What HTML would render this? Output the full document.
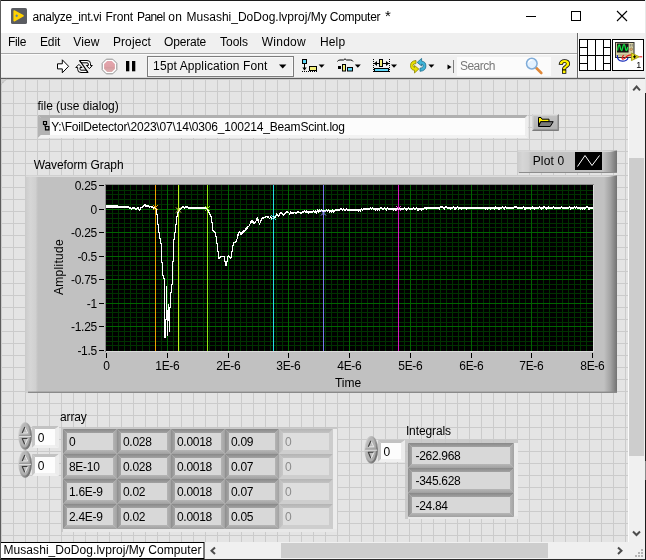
<!DOCTYPE html>
<html><head><meta charset="utf-8"><title>analyze_int.vi Front Panel</title>
<style>
html,body{margin:0;padding:0;background:#fff;}
#w{position:relative;width:646px;height:560px;overflow:hidden;font-family:"Liberation Sans", sans-serif;will-change:transform;}
#w svg{position:absolute;left:0;top:0;}
.t{position:absolute;white-space:pre;line-height:16px;font-size:12px;}
</style></head><body><div id="w">
<svg width="646" height="560" viewBox="0 0 646 560" shape-rendering="auto">
<defs>
<pattern id="grid" x="1" y="79" width="12" height="12" patternUnits="userSpaceOnUse"><rect width="12" height="12" fill="#e4e4e4"/><rect width="1" height="12" fill="#cbcbcb"/><rect width="12" height="1" fill="#cbcbcb"/></pattern>
<linearGradient id="gl" x1="0" x2="1" y1="0" y2="0"><stop offset="0" stop-color="#cdcdcd"/><stop offset="0.35" stop-color="#d6d6d6"/><stop offset="0.8" stop-color="#d0d0d0"/><stop offset="1" stop-color="#c1c1c1"/></linearGradient>
<linearGradient id="gr" x1="0" x2="1" y1="0" y2="0"><stop offset="0" stop-color="#c1c1c1"/><stop offset="0.5" stop-color="#a2a2a2"/><stop offset="1" stop-color="#727272"/></linearGradient>
<linearGradient id="ct" x1="0" x2="0" y1="0" y2="1"><stop offset="0" stop-color="#888888"/><stop offset="1" stop-color="#a2a2a2"/></linearGradient>
<linearGradient id="cl" x1="0" x2="1" y1="0" y2="0"><stop offset="0" stop-color="#8e8e8e"/><stop offset="1" stop-color="#a6a6a6"/></linearGradient>
<linearGradient id="cb" x1="0" x2="0" y1="0" y2="1"><stop offset="0" stop-color="#b6b6b6"/><stop offset="1" stop-color="#a0a0a0"/></linearGradient>
<linearGradient id="cr" x1="0" x2="1" y1="0" y2="0"><stop offset="0" stop-color="#b4b4b4"/><stop offset="1" stop-color="#a2a2a2"/></linearGradient>
<linearGradient id="dt" x1="0" x2="0" y1="0" y2="1"><stop offset="0" stop-color="#b4b4b4"/><stop offset="1" stop-color="#c2c2c2"/></linearGradient>
<linearGradient id="dl" x1="0" x2="1" y1="0" y2="0"><stop offset="0" stop-color="#bcbcbc"/><stop offset="1" stop-color="#c8c8c8"/></linearGradient>
<linearGradient id="ov" x1="0" x2="1" y1="0" y2="0.6"><stop offset="0" stop-color="#e2e2e2"/><stop offset="0.4" stop-color="#b8b8b8"/><stop offset="1" stop-color="#6c6c6c"/></linearGradient>
<linearGradient id="btn" x1="0" x2="0" y1="0" y2="1"><stop offset="0" stop-color="#c4c4c4"/><stop offset="1" stop-color="#b0b0b0"/></linearGradient>
<linearGradient id="stopg" x1="0" x2="0" y1="0" y2="1"><stop offset="0" stop-color="#e4a6ae"/><stop offset="0.5" stop-color="#dfa0a6"/><stop offset="0.55" stop-color="#d69a9e"/><stop offset="1" stop-color="#dcb0b0"/></linearGradient>
</defs>
<rect x="0" y="0" width="646" height="560" fill="#ffffff" />
<rect x="1" y="33" width="644" height="45" fill="#f0f0f0" />
<rect x="1" y="53" width="576" height="1" fill="#a8a8a8" />
<rect x="1" y="77" width="644" height="1" fill="#ffffff" />
<rect x="1" y="77.75" width="644" height="1.25" fill="#5c5c5c" />
<rect x="577" y="33" width="1" height="45" fill="#6a6a6a" />
<rect x="578" y="33" width="1" height="44" fill="#fafafa" />
<rect x="1" y="54" width="576" height="1" fill="#fbfbfb" />
<rect x="11" y="8" width="16" height="16" rx="1.6" fill="#5a5c61"/>
<path d="M14.2 11 L23 15.8 L14.2 20.7 Z" fill="#ffd200" stroke="#ffd200" stroke-width="1.6" stroke-linejoin="round"/>
<path d="M15.4 15.8h2.6M16.7 14.5v2.6" stroke="#4a78b0" stroke-width="0.9"/>
<line x1="526" y1="16.5" x2="536" y2="16.5" stroke="#000" stroke-width="1" />
<rect x="571.5" y="11.5" width="9" height="9" fill="none" stroke="#000"/>
<path d="M617 11 L627 21 M627 11 L617 21" stroke="#000" stroke-width="1.1"/>
<path d="M57.5 63.8 H62.3 V59.8 L68.6 66.3 L62.3 72.8 V68.9 H57.5 Z" fill="#fff" stroke="#000" stroke-width="1" stroke-linejoin="miter"/>
<g fill="#fff" stroke="#000" stroke-width="1" stroke-linejoin="round"><path d="M79.5 60.5 H87 Q90.5 60.5 90.5 63.5 V65.5 H92.3 L89.4 68.6 L86.4 65.5 H88.3 V64 Q88.3 62.8 87 62.8 H81 Z"/><path d="M88 72.5 H81 Q77.7 72.5 77.7 69.5 V67.5 H75.8 L78.9 64.4 L82 67.5 H80 V69 Q80 70.2 81 70.2 H86.5 Z"/></g>
<line x1="79.8" y1="60.6" x2="88" y2="72.6" stroke="#000" stroke-width="1.1" />
<polygon points="106.288,59.2 112.712,59.2 116.8,63.288000000000004 116.8,69.712 112.712,73.8 106.288,73.8 102.2,69.712 102.2,63.288000000000004" fill="#fff" stroke="#8e8e8e" stroke-width="1"/>
<polygon points="107.124,61.1 111.876,61.1 114.9,64.124 114.9,68.876 111.876,71.9 107.124,71.9 104.1,68.876 104.1,64.124" fill="url(#stopg)" />
<rect x="126" y="61" width="3.3" height="10.3" fill="#000" />
<rect x="132" y="61" width="3.3" height="10.3" fill="#000" />
<rect x="147.5" y="56.5" width="146" height="20" fill="#f0f0f0" stroke="#7c7c7c"/><rect x="148.5" y="57.5" width="144" height="18" fill="none" stroke="#f8f8f8"/>
<polygon points="279,64.6 286.4,64.6 282.7,68.4" fill="#000" />
<rect x="302.5" y="59.5" width="4" height="4" fill="#5fd8f8" stroke="#000"/>
<line x1="304.5" y1="64" x2="304.5" y2="70" stroke="#000" stroke-width="1" />
<polygon points="302.3,67.5 306.7,67.5 304.5,70.5" fill="#000" />
<rect x="309.5" y="66.5" width="7" height="4" fill="#f4f07c" stroke="#000"/>
<line x1="302" y1="71.5" x2="317" y2="71.5" stroke="#000" stroke-width="1" stroke-dasharray="1 1"/>
<polygon points="318.6,64.6 324.6,64.6 321.6,67.8" fill="#000" />
<path d="M337.5 61.5 Q338 60 340 60 H343.5 L345 58.8 L346.5 60 H350.5 Q352.5 60 353 61.5" fill="none" stroke="#000"/>
<rect x="338" y="66" width="3" height="3" fill="#000" />
<rect x="342.5" y="64.5" width="3" height="6.5" fill="#f4f07c" stroke="#000"/>
<rect x="347.5" y="67.5" width="5" height="3.5" fill="#5fd8f8" stroke="#000"/>
<polygon points="354.8,64.6 360.8,64.6 357.8,67.8" fill="#000" />
<line x1="373.5" y1="59" x2="373.5" y2="72" stroke="#000" stroke-width="1" stroke-dasharray="1 1"/>
<line x1="389.5" y1="59" x2="389.5" y2="72" stroke="#000" stroke-width="1" stroke-dasharray="1 1"/>
<rect x="379.5" y="59.5" width="3" height="7" fill="#f4f07c" stroke="#000"/>
<line x1="374" y1="63.5" x2="379" y2="63.5" stroke="#000" stroke-width="1" />
<line x1="383" y1="63.5" x2="389" y2="63.5" stroke="#000" stroke-width="1" />
<polygon points="374,63.5 377,61 377,66" fill="#000" />
<polygon points="389,63.5 386,61 386,66" fill="#000" />
<rect x="374.5" y="68.5" width="14" height="3" fill="#5fd8f8" stroke="#000"/>
<polygon points="391,64.6 397,64.6 394,67.8" fill="#000" />
<path d="M416 60.5 Q410.5 61 410.5 65.5 Q410.5 70 414.5 70.3 V73 L418.8 69 L414.5 65.5 V67.6 Q413 67 413 65.3 Q413 63.6 416 63.6 Z" fill="#e8e000" stroke="#8c8400" stroke-width="0.8"/>
<path d="M420 71.3 Q425.9 70.8 425.9 66 Q425.9 61.5 421.6 61.2 V58.4 L417.2 62.4 L421.6 66 V64 Q423.2 64.4 423.2 66 Q423.2 68.2 420 68.2 Z" fill="#40b4d8" stroke="#1c6c8c" stroke-width="0.8"/>
<polygon points="428.4,64.6 434.4,64.6 431.4,67.8" fill="#000" />
<polygon points="447.5,64.5 451.5,67 447.5,69.5" fill="#000" />
<line x1="453.5" y1="60" x2="453.5" y2="73" stroke="#808080" stroke-width="1" />
<rect x="457" y="57" width="94" height="19" fill="#fbfbfb" />
<line x1="536.3" y1="68" x2="541.3" y2="73" stroke="#e08838" stroke-width="2.6" stroke-linecap="round"/>
<circle cx="531.8" cy="63.6" r="5.3" fill="#e4f2ff" stroke="#80acd8" stroke-width="1.5"/>
<path d="M528.4 62.4 Q529.4 59.8 532.4 59.9" fill="none" stroke="#fff" stroke-width="1.3"/>
<rect x="579.5" y="39.5" width="31" height="31" fill="#fff" stroke="#000"/>
<line x1="587.5" y1="40" x2="587.5" y2="70" stroke="#000" stroke-width="1" />
<line x1="595.5" y1="40" x2="595.5" y2="70" stroke="#000" stroke-width="1" />
<line x1="603.5" y1="40" x2="603.5" y2="70" stroke="#000" stroke-width="1" />
<line x1="580" y1="55.5" x2="610" y2="55.5" stroke="#000" stroke-width="1" />
<line x1="580" y1="47.5" x2="587" y2="47.5" stroke="#000" stroke-width="1" />
<line x1="604" y1="47.5" x2="610" y2="47.5" stroke="#000" stroke-width="1" />
<line x1="580" y1="63.5" x2="587" y2="63.5" stroke="#000" stroke-width="1" />
<line x1="604" y1="63.5" x2="610" y2="63.5" stroke="#000" stroke-width="1" />
<rect x="612.5" y="39.5" width="31" height="31" fill="#fff" stroke="#000"/>
<rect x="615.5" y="42.5" width="18.5" height="15" fill="#d6d0a2" stroke="#2c2c2c"/>
<rect x="617" y="43.5" width="11.6" height="9" fill="#141414" />
<path d="M617.6 50.5 C618.3 43.5 619.6 43.5 620.4 48 C621 51.5 621.9 51.5 622.6 48 C623.4 43.5 624.7 43.5 625.4 48 C626 51.5 626.9 51.5 627.8 47" fill="none" stroke="#10e040" stroke-width="1.3"/>
<circle cx="631.2" cy="49.2" r="1.3" fill="#e8b070" stroke="#7c6c4c" stroke-width="0.6"/>
<line x1="630.3" y1="44" x2="630.3" y2="46.5" stroke="#6c6c6c" stroke-width="0.8" />
<line x1="632.2" y1="44" x2="632.2" y2="46.5" stroke="#6c6c6c" stroke-width="0.8" />
<line x1="618" y1="55" x2="627" y2="55" stroke="#a8a07c" stroke-width="0.8" />
<path d="M617.3 55 Q617 61 622.5 61.2 Q627 61.2 628 57.8" fill="none" stroke="#1428b8" stroke-width="1.2"/>
<path d="M623.6 55 Q620.6 59.5 623.6 59 Q625.6 58.4 626.4 56.6 Q628 54.6 632 54.8" fill="none" stroke="#e81818" stroke-width="1.2"/>
<path d="M631.4 53 L639.4 56.8 L631.4 60.6 Z" fill="#e8e020" stroke="#a09810" stroke-width="0.9"/>
<path d="M633 56.8h3.2M634.6 55.2v3.2" stroke="#000" stroke-width="1"/>
<line x1="639.4" y1="56.8" x2="642.2" y2="56.8" stroke="#e81818" stroke-width="1.1" />
<rect x="1" y="79" width="627" height="463" fill="url(#grid)" />
<polygon points="1,79 6.5,79 1,84.5" fill="#cfcfcf" />
<line x1="6.5" y1="79" x2="1" y2="84.5" stroke="#9a9a9a" stroke-width="0.8" stroke-dasharray="1.2 1"/>
<rect x="41" y="118" width="484" height="17" fill="#fcfcfc" />
<polygon points="38,115 528,115 525,118 41,118" fill="#b0b0b0" />
<polygon points="38,115 41,118 41,135 38,138" fill="#b4b4b4" />
<polygon points="38,138 41,135 525,135 528,138" fill="#f2f2f2" />
<polygon points="528,115 528,138 525,135 525,118" fill="#eeeeee" />
<rect x="41" y="118" width="9" height="17" fill="#b4b4b4" />
<path d="M43.5 121.5h3v3h-3z M45.5 126.5h3.4v3.4h-3.4z M45 124.5v2" fill="none" stroke="#000" stroke-width="1.2"/>
<rect x="532" y="114" width="27" height="17" fill="url(#btn)" />
<polygon points="532,114 559,114 557.5,115.5 533.5,115.5" fill="#dedede" />
<polygon points="532,114 533.5,115.5 533.5,129.5 532,131" fill="#d4d4d4" />
<polygon points="532,131 533.5,129.5 557.5,129.5 559,131" fill="#7c7c7c" />
<polygon points="559,114 559,131 557.5,129.5 557.5,115.5" fill="#868686" />
<path d="M538.5 126 V117.5 h2.5 l1 1.7 h7 v2.6 h-8.5 Z" fill="#fff000" stroke="#000" stroke-width="1" stroke-linejoin="round"/>
<path d="M540.8 121.7 h12.4 l-3 4.8 h-11.7 Z" fill="#7a7a7a" stroke="#000" stroke-width="1" stroke-linejoin="round"/>
<rect x="518" y="150.5" width="99" height="22.5" fill="#c1c1c1" />
<rect x="518" y="150.5" width="13" height="22.5" fill="url(#gl)" />
<rect x="603" y="150.5" width="14" height="22.5" fill="url(#gr)" />
<polygon points="518,150.5 617,150.5 610,152 518,152" fill="#d8d8d8" />
<rect x="519" y="172" width="98" height="1" fill="#8c8c8c" />
<rect x="575" y="152" width="27" height="18" fill="#000" />
<polyline points="577.5,166.5 585,155.5 592,165.5 599.5,155.5" fill="none" stroke="#fff" stroke-width="1"/>
<rect x="26" y="175.4" width="591" height="217.6" fill="#c1c1c1" />
<rect x="26" y="175.4" width="12" height="217.6" fill="url(#gl)" />
<rect x="604" y="175.4" width="13" height="217.6" fill="url(#gr)" />
<polygon points="26,175.4 617,175.4 608,177.0 26,177.0" fill="#dcdcdc" />
<rect x="28" y="391.6" width="589" height="1.4" fill="#8a8a8a" />
<rect x="105" y="184" width="489" height="168" fill="#8a8a8a" />
<rect x="106" y="351" width="488" height="1" fill="#dadada" />
<rect x="593" y="185" width="1" height="167" fill="#dadada" />
<rect x="106" y="185" width="487" height="166" fill="#000" />
<path d="M112.5 185V351M118.5 185V351M124.5 185V351M130.5 185V351M136.5 185V351M142.5 185V351M149.5 185V351M155.5 185V351M161.5 185V351M173.5 185V351M179.5 185V351M185.5 185V351M191.5 185V351M197.5 185V351M203.5 185V351M209.5 185V351M215.5 185V351M221.5 185V351M234.5 185V351M240.5 185V351M246.5 185V351M252.5 185V351M258.5 185V351M264.5 185V351M270.5 185V351M276.5 185V351M282.5 185V351M294.5 185V351M300.5 185V351M306.5 185V351M313.5 185V351M319.5 185V351M325.5 185V351M331.5 185V351M337.5 185V351M343.5 185V351M355.5 185V351M361.5 185V351M367.5 185V351M373.5 185V351M379.5 185V351M385.5 185V351M392.5 185V351M398.5 185V351M404.5 185V351M416.5 185V351M422.5 185V351M428.5 185V351M434.5 185V351M440.5 185V351M446.5 185V351M452.5 185V351M458.5 185V351M464.5 185V351M477.5 185V351M483.5 185V351M489.5 185V351M495.5 185V351M501.5 185V351M507.5 185V351M513.5 185V351M519.5 185V351M525.5 185V351M537.5 185V351M543.5 185V351M549.5 185V351M556.5 185V351M562.5 185V351M568.5 185V351M574.5 185V351M580.5 185V351M586.5 185V351M106 190.5H593M106 194.5H593M106 199.5H593M106 204.5H593M106 213.5H593M106 218.5H593M106 223.5H593M106 227.5H593M106 237.5H593M106 242.5H593M106 246.5H593M106 251.5H593M106 260.5H593M106 265.5H593M106 270.5H593M106 275.5H593M106 284.5H593M106 289.5H593M106 293.5H593M106 298.5H593M106 308.5H593M106 312.5H593M106 317.5H593M106 322.5H593M106 331.5H593M106 336.5H593M106 341.5H593M106 345.5H593" stroke="#003200" stroke-width="1" fill="none"/>
<path d="M167.5 185V351M228.5 185V351M288.5 185V351M349.5 185V351M410.5 185V351M471.5 185V351M531.5 185V351M106 209.5H593M106 232.5H593M106 256.5H593M106 279.5H593M106 303.5H593M106 326.5H593" stroke="#006400" stroke-width="1" fill="none"/>
<rect x="155" y="185" width="1" height="166" fill="#f0a000" />
<rect x="178" y="185" width="1" height="166" fill="#c0f020" />
<rect x="207" y="185" width="1" height="166" fill="#90e810" />
<rect x="273" y="185" width="1" height="166" fill="#20e0e0" />
<rect x="323" y="185" width="1" height="166" fill="#7878f0" />
<rect x="398" y="185" width="1" height="166" fill="#d818c0" />
<rect x="99" y="185" width="5" height="1" fill="#000" />
<rect x="99" y="209" width="5" height="1" fill="#000" />
<rect x="99" y="232" width="5" height="1" fill="#000" />
<rect x="99" y="256" width="5" height="1" fill="#000" />
<rect x="99" y="279" width="5" height="1" fill="#000" />
<rect x="99" y="303" width="5" height="1" fill="#000" />
<rect x="99" y="326" width="5" height="1" fill="#000" />
<rect x="99" y="350" width="5" height="1" fill="#000" />
<rect x="106" y="353" width="1" height="5" fill="#000" />
<rect x="167" y="353" width="1" height="5" fill="#000" />
<rect x="228" y="353" width="1" height="5" fill="#000" />
<rect x="288" y="353" width="1" height="5" fill="#000" />
<rect x="349" y="353" width="1" height="5" fill="#000" />
<rect x="410" y="353" width="1" height="5" fill="#000" />
<rect x="471" y="353" width="1" height="5" fill="#000" />
<rect x="531" y="353" width="1" height="5" fill="#000" />
<rect x="592" y="353" width="1" height="5" fill="#000" />
<path d="M106.5 205V208M107.5 205V208M108.5 205V208M109.5 205V208M110.5 205V208M111.5 205V208M112.5 205V208M113.5 205V208M114.5 205V208M115.5 205V208M116.5 205V208M117.5 205V208M118.5 206V208M119.5 206V208M120.5 206V208M121.5 206V208M122.5 206V208M123.5 206V208M124.5 206V208M125.5 206V208M126.5 206V208M127.5 206V208M128.5 206V208M129.5 207V209M130.5 207V209M131.5 208V210M132.5 207V209M133.5 207V209M134.5 207V209M135.5 208V210M136.5 208V210M137.5 207V209M138.5 207V210M139.5 209V211M140.5 207V210M141.5 207V208M142.5 206V208M143.5 205V207M144.5 204V206M145.5 204V207M146.5 205V207M147.5 205V207M148.5 205V207M149.5 206V208M150.5 206V207M151.5 206V208M152.5 206V208M153.5 207V209M154.5 207V209M155.5 207V209M156.5 208V215M157.5 214V225M158.5 224V233M159.5 232V239M160.5 238V244M161.5 243V263M162.5 262V276M163.5 275V279M164.5 278V338M165.5 319V338M166.5 286V320M167.5 310V336M168.5 304V321M169.5 307V332M170.5 292V308M171.5 284V293M172.5 261V285M173.5 239V262M174.5 232V240M175.5 224V233M176.5 216V225M177.5 212V217M178.5 210V213M179.5 208V211M180.5 208V210M181.5 207V209M182.5 206V208M183.5 206V208M184.5 207V209M185.5 206V208M186.5 206V208M187.5 206V208M188.5 207V209M189.5 207V209M190.5 207V209M191.5 207V209M192.5 207V209M193.5 207V209M194.5 207V209M195.5 207V209M196.5 207V209M197.5 207V209M198.5 207V209M199.5 207V209M200.5 207V209M201.5 207V209M202.5 207V209M203.5 207V209M204.5 207V209M205.5 207V209M206.5 207V210M207.5 209V211M208.5 210V213M209.5 212V215M210.5 214V217M211.5 216V223M212.5 222V231M213.5 230V232M214.5 231V233M215.5 232V237M216.5 236V244M217.5 243V252M218.5 251V259M219.5 257V259M220.5 256V258M221.5 256V257M222.5 256V257M223.5 256V257M224.5 256V262M225.5 261V266M226.5 261V266M227.5 256V262M228.5 255V257M229.5 256V258M230.5 257V259M231.5 251V258M232.5 245V252M233.5 242V246M234.5 242V243M235.5 241V243M236.5 239V242M237.5 234V239M238.5 232V236M239.5 231V233M240.5 232V235M241.5 232V235M242.5 231V234M243.5 230V233M244.5 230V232M245.5 228V231M246.5 227V230M247.5 226V229M248.5 226V227M249.5 224V226M250.5 221V224M251.5 220V223M252.5 220V223M253.5 221V224M254.5 222V224M255.5 221V223M256.5 218V221M257.5 217V221M258.5 219V223M259.5 223V225M260.5 220V223M261.5 218V221M262.5 217V219M263.5 217V219M264.5 217V218M265.5 216V218M266.5 216V217M267.5 216V218M268.5 216V218M269.5 218V219M270.5 216V218M271.5 217V219M272.5 218V219M273.5 216V219M274.5 216V218M275.5 216V218M276.5 213V216M277.5 214V216M278.5 215V217M279.5 213V216M280.5 212V214M281.5 212V214M282.5 213V215M283.5 214V216M284.5 213V215M285.5 212V214M286.5 211V213M287.5 211V213M288.5 212V213M289.5 213V215M290.5 211V214M291.5 212V214M292.5 212V214M293.5 212V214M294.5 212V213M295.5 212V214M296.5 212V214M297.5 211V213M298.5 211V213M299.5 212V213M300.5 212V214M301.5 212V214M302.5 211V213M303.5 211V213M304.5 210V212M305.5 211V213M306.5 210V213M307.5 211V213M308.5 211V214M309.5 211V213M310.5 211V213M311.5 211V213M312.5 211V213M313.5 210V212M314.5 211V213M315.5 210V213M316.5 211V214M317.5 209V212M318.5 210V213M319.5 209V212M320.5 210V212M321.5 209V211M322.5 210V212M323.5 210V212M324.5 210V212M325.5 210V212M326.5 209V211M327.5 210V212M328.5 209V211M329.5 210V213M330.5 210V212M331.5 210V213M332.5 209V212M333.5 210V213M334.5 210V212M335.5 209V211M336.5 209V211M337.5 209V211M338.5 209V211M339.5 209V211M340.5 208V210M341.5 208V210M342.5 209V211M343.5 208V210M344.5 209V211M345.5 209V211M346.5 208V210M347.5 209V211M348.5 209V211M349.5 209V211M350.5 209V211M351.5 209V211M352.5 209V211M353.5 209V211M354.5 209V211M355.5 209V211M356.5 209V211M357.5 209V211M358.5 209V212M359.5 209V211M360.5 209V212M361.5 208V210M362.5 209V211M363.5 208V210M364.5 208V210M365.5 208V210M366.5 208V210M367.5 208V210M368.5 208V210M369.5 208V210M370.5 207V209M371.5 208V210M372.5 207V209M373.5 208V210M374.5 208V210M375.5 208V211M376.5 208V210M377.5 208V211M378.5 208V210M379.5 208V211M380.5 207V209M381.5 207V209M382.5 208V210M383.5 208V210M384.5 207V209M385.5 208V210M386.5 208V211M387.5 207V209M388.5 208V210M389.5 208V210M390.5 208V210M391.5 208V210M392.5 208V210M393.5 208V211M394.5 208V210M395.5 208V211M396.5 208V210M397.5 208V210M398.5 208V210M399.5 207V209M400.5 208V210M401.5 208V210M402.5 208V210M403.5 208V210M404.5 207V209M405.5 208V210M406.5 208V211M407.5 208V210M408.5 207V209M409.5 208V210M410.5 208V210M411.5 208V210M412.5 208V210M413.5 207V209M414.5 208V210M415.5 208V210M416.5 207V209M417.5 208V211M418.5 208V211M419.5 208V210M420.5 208V210M421.5 208V211M422.5 208V210M423.5 208V210M424.5 207V209M425.5 207V209M426.5 207V210M427.5 207V209M428.5 207V209M429.5 207V209M430.5 207V209M431.5 207V209M432.5 207V209M433.5 207V209M434.5 207V209M435.5 207V209M436.5 207V209M437.5 207V209M438.5 207V209M439.5 207V210M440.5 206V208M441.5 206V208M442.5 206V208M443.5 207V209M444.5 207V210M445.5 206V208M446.5 206V208M447.5 207V209M448.5 207V209M449.5 207V209M450.5 207V210M451.5 207V209M452.5 207V209M453.5 206V208M454.5 207V210M455.5 207V210M456.5 207V209M457.5 206V208M458.5 207V210M459.5 207V209M460.5 207V209M461.5 207V210M462.5 207V209M463.5 207V209M464.5 207V209M465.5 207V209M466.5 207V210M467.5 207V209M468.5 207V209M469.5 207V209M470.5 207V209M471.5 207V209M472.5 207V209M473.5 207V209M474.5 207V209M475.5 207V209M476.5 207V209M477.5 207V209M478.5 207V209M479.5 207V209M480.5 207V209M481.5 207V209M482.5 207V209M483.5 207V209M484.5 207V209M485.5 207V210M486.5 207V209M487.5 207V210M488.5 207V209M489.5 207V209M490.5 207V210M491.5 207V209M492.5 207V209M493.5 207V209M494.5 207V210M495.5 206V209M496.5 207V209M497.5 207V209M498.5 207V210M499.5 207V210M500.5 207V209M501.5 207V209M502.5 206V208M503.5 207V209M504.5 207V210M505.5 206V208M506.5 207V209M507.5 207V209M508.5 207V209M509.5 207V209M510.5 207V209M511.5 207V209M512.5 207V209M513.5 207V209M514.5 206V208M515.5 206V208M516.5 206V208M517.5 207V209M518.5 207V209M519.5 207V209M520.5 207V209M521.5 207V209M522.5 207V209M523.5 206V208M524.5 207V210M525.5 207V210M526.5 207V209M527.5 207V209M528.5 207V209M529.5 207V209M530.5 207V210M531.5 207V209M532.5 206V209M533.5 207V209M534.5 207V210M535.5 207V209M536.5 207V209M537.5 207V209M538.5 207V209M539.5 206V208M540.5 207V209M541.5 207V210M542.5 207V209M543.5 206V209M544.5 206V208M545.5 207V209M546.5 207V210M547.5 207V209M548.5 206V209M549.5 207V209M550.5 207V209M551.5 207V209M552.5 207V209M553.5 206V208M554.5 207V209M555.5 207V209M556.5 207V209M557.5 207V209M558.5 207V209M559.5 207V209M560.5 207V209M561.5 206V208M562.5 207V209M563.5 207V209M564.5 207V209M565.5 207V209M566.5 207V209M567.5 207V209M568.5 207V209M569.5 206V208M570.5 207V210M571.5 207V209M572.5 207V209M573.5 207V209M574.5 206V208M575.5 207V209M576.5 206V208M577.5 207V209M578.5 207V209M579.5 207V209M580.5 207V210M581.5 207V209M582.5 207V210M583.5 207V209M584.5 207V210M585.5 207V209M586.5 206V208M587.5 206V208M588.5 207V210M589.5 207V210M590.5 207V209M591.5 207V209M592.5 207V209" stroke="#fff" stroke-width="1" fill="none" shape-rendering="crispEdges"/>
<path d="M153.0 205.0L158.0 210.0M158.0 205.0L153.0 210.0" stroke="#f0a000" stroke-width="1" fill="none"/>
<path d="M176.0 207.5L181.0 212.5M181.0 207.5L176.0 212.5" stroke="#d8f040" stroke-width="1" fill="none"/>
<path d="M205.0 206.0L210.0 211.0M210.0 206.0L205.0 211.0" stroke="#90e810" stroke-width="1" fill="none"/>
<path d="M271.0 215.0L276.0 220.0M276.0 215.0L271.0 220.0" stroke="#40e8e8" stroke-width="1" fill="none"/>
<path d="M321.0 210.5L326.0 215.5M326.0 210.5L321.0 215.5" stroke="#9090f8" stroke-width="1" fill="none"/>
<path d="M396.0 206.0L401.0 211.0M401.0 206.0L396.0 211.0" stroke="#f060e0" stroke-width="1" fill="none"/>
<ellipse cx="25.1" cy="436.0" rx="6.8" ry="13.7" fill="url(#ov)"/>
<ellipse cx="24.8" cy="435.7" rx="5.1" ry="11.899999999999999" fill="#b6b6b6" opacity="0.8"/>
<line x1="19.1" y1="435.4" x2="31.099999999999998" y2="435.4" stroke="#8e8e8e" stroke-width="1" />
<line x1="19.1" y1="436.4" x2="31.099999999999998" y2="436.4" stroke="#e2e2e2" stroke-width="1" />
<path d="M24.8 427.0L27.700000000000003 433.0L22.200000000000003 433.0" fill="#bcbcbc" stroke="#ececec" stroke-width="0.9"/>
<path d="M22.200000000000003 433.0L24.8 427.0" fill="none" stroke="#3a3a3a" stroke-width="1.1"/>
<path d="M27.700000000000003 438.5L24.900000000000002 444.8" fill="none" stroke="#ececec" stroke-width="0.9"/>
<path d="M27.700000000000003 438.5L22.200000000000003 438.5L24.900000000000002 444.8" fill="#bcbcbc" stroke="#3a3a3a" stroke-width="1.1" stroke-linejoin="round"/>
<path d="M27.700000000000003 438.5L24.900000000000002 444.8" fill="none" stroke="#e8e8e8" stroke-width="0.9"/>
<rect x="35" y="429" width="20" height="16" fill="#fdfdfd" />
<polygon points="32,426 59,426 55,429 35,429" fill="#c2c2c2" />
<polygon points="32,426 35,429 35,445 32,448" fill="#c6c6c6" />
<polygon points="32,448 35,445 55,445 59,448" fill="#f0f0f0" />
<polygon points="59,426 59,448 55,445 55,429" fill="#ececec" />
<ellipse cx="25.1" cy="464.0" rx="6.8" ry="13.7" fill="url(#ov)"/>
<ellipse cx="24.8" cy="463.7" rx="5.1" ry="11.899999999999999" fill="#b6b6b6" opacity="0.8"/>
<line x1="19.1" y1="463.4" x2="31.099999999999998" y2="463.4" stroke="#8e8e8e" stroke-width="1" />
<line x1="19.1" y1="464.4" x2="31.099999999999998" y2="464.4" stroke="#e2e2e2" stroke-width="1" />
<path d="M24.8 455.0L27.700000000000003 461.0L22.200000000000003 461.0" fill="#bcbcbc" stroke="#ececec" stroke-width="0.9"/>
<path d="M22.200000000000003 461.0L24.8 455.0" fill="none" stroke="#3a3a3a" stroke-width="1.1"/>
<path d="M27.700000000000003 466.5L24.900000000000002 472.8" fill="none" stroke="#ececec" stroke-width="0.9"/>
<path d="M27.700000000000003 466.5L22.200000000000003 466.5L24.900000000000002 472.8" fill="#bcbcbc" stroke="#3a3a3a" stroke-width="1.1" stroke-linejoin="round"/>
<path d="M27.700000000000003 466.5L24.900000000000002 472.8" fill="none" stroke="#e8e8e8" stroke-width="0.9"/>
<rect x="35" y="457" width="20" height="16" fill="#fdfdfd" />
<polygon points="32,454 59,454 55,457 35,457" fill="#c2c2c2" />
<polygon points="32,454 35,457 35,473 32,476" fill="#c6c6c6" />
<polygon points="32,476 35,473 55,473 59,476" fill="#f0f0f0" />
<polygon points="59,454 59,476 55,473 55,457" fill="#ececec" />
<ellipse cx="371.2" cy="449.8" rx="6.8" ry="13.7" fill="url(#ov)"/>
<ellipse cx="370.9" cy="449.5" rx="5.1" ry="11.899999999999999" fill="#b6b6b6" opacity="0.8"/>
<line x1="365.2" y1="449.2" x2="377.2" y2="449.2" stroke="#8e8e8e" stroke-width="1" />
<line x1="365.2" y1="450.2" x2="377.2" y2="450.2" stroke="#e2e2e2" stroke-width="1" />
<path d="M370.9 440.8L373.8 446.8L368.3 446.8" fill="#bcbcbc" stroke="#ececec" stroke-width="0.9"/>
<path d="M368.3 446.8L370.9 440.8" fill="none" stroke="#3a3a3a" stroke-width="1.1"/>
<path d="M373.8 452.3L371.0 458.6" fill="none" stroke="#ececec" stroke-width="0.9"/>
<path d="M373.8 452.3L368.3 452.3L371.0 458.6" fill="#bcbcbc" stroke="#3a3a3a" stroke-width="1.1" stroke-linejoin="round"/>
<path d="M373.8 452.3L371.0 458.6" fill="none" stroke="#e8e8e8" stroke-width="0.9"/>
<rect x="381" y="443" width="20" height="16" fill="#fdfdfd" />
<polygon points="378,440 405,440 401,443 381,443" fill="#c2c2c2" />
<polygon points="378,440 381,443 381,459 378,462" fill="#c6c6c6" />
<polygon points="378,462 381,459 401,459 405,462" fill="#f0f0f0" />
<polygon points="405,440 405,462 401,459 401,443" fill="#ececec" />
<rect x="61" y="427" width="276" height="105" fill="#c6c6c6" opacity="0.85"/>
<rect x="333" y="429" width="4" height="103" fill="#ececec" />
<rect x="63" y="529" width="274" height="3" fill="#e8e8e8" />
<rect x="67" y="433" width="46" height="17" fill="#d8d8d8" />
<polygon points="63,429 117,429 113,433 67,433" fill="url(#ct)" />
<polygon points="63,429 67,433 67,450 63,454" fill="url(#cl)" />
<polygon points="63,454 67,450 113,450 117,454" fill="url(#cb)" />
<polygon points="117,429 117,454 113,450 113,433" fill="url(#cr)" />
<rect x="121" y="433" width="46" height="17" fill="#d8d8d8" />
<polygon points="117,429 171,429 167,433 121,433" fill="url(#ct)" />
<polygon points="117,429 121,433 121,450 117,454" fill="url(#cl)" />
<polygon points="117,454 121,450 167,450 171,454" fill="url(#cb)" />
<polygon points="171,429 171,454 167,450 167,433" fill="url(#cr)" />
<rect x="175" y="433" width="46" height="17" fill="#d8d8d8" />
<polygon points="171,429 225,429 221,433 175,433" fill="url(#ct)" />
<polygon points="171,429 175,433 175,450 171,454" fill="url(#cl)" />
<polygon points="171,454 175,450 221,450 225,454" fill="url(#cb)" />
<polygon points="225,429 225,454 221,450 221,433" fill="url(#cr)" />
<rect x="229" y="433" width="46" height="17" fill="#d8d8d8" />
<polygon points="225,429 279,429 275,433 229,433" fill="url(#ct)" />
<polygon points="225,429 229,433 229,450 225,454" fill="url(#cl)" />
<polygon points="225,454 229,450 275,450 279,454" fill="url(#cb)" />
<polygon points="279,429 279,454 275,450 275,433" fill="url(#cr)" />
<rect x="283" y="433" width="46" height="17" fill="#dedede" />
<polygon points="279,429 333,429 329,433 283,433" fill="url(#dt)" />
<polygon points="279,429 283,433 283,450 279,454" fill="url(#dl)" />
<polygon points="279,454 283,450 329,450 333,454" fill="#cecece" />
<polygon points="333,429 333,454 329,450 329,433" fill="#cccccc" />
<rect x="67" y="458" width="46" height="17" fill="#d8d8d8" />
<polygon points="63,454 117,454 113,458 67,458" fill="url(#ct)" />
<polygon points="63,454 67,458 67,475 63,479" fill="url(#cl)" />
<polygon points="63,479 67,475 113,475 117,479" fill="url(#cb)" />
<polygon points="117,454 117,479 113,475 113,458" fill="url(#cr)" />
<rect x="121" y="458" width="46" height="17" fill="#d8d8d8" />
<polygon points="117,454 171,454 167,458 121,458" fill="url(#ct)" />
<polygon points="117,454 121,458 121,475 117,479" fill="url(#cl)" />
<polygon points="117,479 121,475 167,475 171,479" fill="url(#cb)" />
<polygon points="171,454 171,479 167,475 167,458" fill="url(#cr)" />
<rect x="175" y="458" width="46" height="17" fill="#d8d8d8" />
<polygon points="171,454 225,454 221,458 175,458" fill="url(#ct)" />
<polygon points="171,454 175,458 175,475 171,479" fill="url(#cl)" />
<polygon points="171,479 175,475 221,475 225,479" fill="url(#cb)" />
<polygon points="225,454 225,479 221,475 221,458" fill="url(#cr)" />
<rect x="229" y="458" width="46" height="17" fill="#d8d8d8" />
<polygon points="225,454 279,454 275,458 229,458" fill="url(#ct)" />
<polygon points="225,454 229,458 229,475 225,479" fill="url(#cl)" />
<polygon points="225,479 229,475 275,475 279,479" fill="url(#cb)" />
<polygon points="279,454 279,479 275,475 275,458" fill="url(#cr)" />
<rect x="283" y="458" width="46" height="17" fill="#dedede" />
<polygon points="279,454 333,454 329,458 283,458" fill="url(#dt)" />
<polygon points="279,454 283,458 283,475 279,479" fill="url(#dl)" />
<polygon points="279,479 283,475 329,475 333,479" fill="#cecece" />
<polygon points="333,454 333,479 329,475 329,458" fill="#cccccc" />
<rect x="67" y="483" width="46" height="17" fill="#d8d8d8" />
<polygon points="63,479 117,479 113,483 67,483" fill="url(#ct)" />
<polygon points="63,479 67,483 67,500 63,504" fill="url(#cl)" />
<polygon points="63,504 67,500 113,500 117,504" fill="url(#cb)" />
<polygon points="117,479 117,504 113,500 113,483" fill="url(#cr)" />
<rect x="121" y="483" width="46" height="17" fill="#d8d8d8" />
<polygon points="117,479 171,479 167,483 121,483" fill="url(#ct)" />
<polygon points="117,479 121,483 121,500 117,504" fill="url(#cl)" />
<polygon points="117,504 121,500 167,500 171,504" fill="url(#cb)" />
<polygon points="171,479 171,504 167,500 167,483" fill="url(#cr)" />
<rect x="175" y="483" width="46" height="17" fill="#d8d8d8" />
<polygon points="171,479 225,479 221,483 175,483" fill="url(#ct)" />
<polygon points="171,479 175,483 175,500 171,504" fill="url(#cl)" />
<polygon points="171,504 175,500 221,500 225,504" fill="url(#cb)" />
<polygon points="225,479 225,504 221,500 221,483" fill="url(#cr)" />
<rect x="229" y="483" width="46" height="17" fill="#d8d8d8" />
<polygon points="225,479 279,479 275,483 229,483" fill="url(#ct)" />
<polygon points="225,479 229,483 229,500 225,504" fill="url(#cl)" />
<polygon points="225,504 229,500 275,500 279,504" fill="url(#cb)" />
<polygon points="279,479 279,504 275,500 275,483" fill="url(#cr)" />
<rect x="283" y="483" width="46" height="17" fill="#dedede" />
<polygon points="279,479 333,479 329,483 283,483" fill="url(#dt)" />
<polygon points="279,479 283,483 283,500 279,504" fill="url(#dl)" />
<polygon points="279,504 283,500 329,500 333,504" fill="#cecece" />
<polygon points="333,479 333,504 329,500 329,483" fill="#cccccc" />
<rect x="67" y="508" width="46" height="17" fill="#d8d8d8" />
<polygon points="63,504 117,504 113,508 67,508" fill="url(#ct)" />
<polygon points="63,504 67,508 67,525 63,529" fill="url(#cl)" />
<polygon points="63,529 67,525 113,525 117,529" fill="url(#cb)" />
<polygon points="117,504 117,529 113,525 113,508" fill="url(#cr)" />
<rect x="121" y="508" width="46" height="17" fill="#d8d8d8" />
<polygon points="117,504 171,504 167,508 121,508" fill="url(#ct)" />
<polygon points="117,504 121,508 121,525 117,529" fill="url(#cl)" />
<polygon points="117,529 121,525 167,525 171,529" fill="url(#cb)" />
<polygon points="171,504 171,529 167,525 167,508" fill="url(#cr)" />
<rect x="175" y="508" width="46" height="17" fill="#d8d8d8" />
<polygon points="171,504 225,504 221,508 175,508" fill="url(#ct)" />
<polygon points="171,504 175,508 175,525 171,529" fill="url(#cl)" />
<polygon points="171,529 175,525 221,525 225,529" fill="url(#cb)" />
<polygon points="225,504 225,529 221,525 221,508" fill="url(#cr)" />
<rect x="229" y="508" width="46" height="17" fill="#d8d8d8" />
<polygon points="225,504 279,504 275,508 229,508" fill="url(#ct)" />
<polygon points="225,504 229,508 229,525 225,529" fill="url(#cl)" />
<polygon points="225,529 229,525 275,525 279,529" fill="url(#cb)" />
<polygon points="279,504 279,529 275,525 275,508" fill="url(#cr)" />
<rect x="283" y="508" width="46" height="17" fill="#dedede" />
<polygon points="279,504 333,504 329,508 283,508" fill="url(#dt)" />
<polygon points="279,504 283,508 283,525 279,529" fill="url(#dl)" />
<polygon points="279,529 283,525 329,525 333,529" fill="#cecece" />
<polygon points="333,504 333,529 329,525 329,508" fill="#cccccc" />
<rect x="405" y="440" width="113" height="79" fill="#c6c6c6" opacity="0.85"/>
<rect x="514" y="443" width="4" height="76" fill="#ececec" />
<rect x="408" y="516" width="110" height="3" fill="#e8e8e8" />
<rect x="412" y="447" width="98" height="17" fill="#d8d8d8" />
<polygon points="408,443 514,443 510,447 412,447" fill="url(#ct)" />
<polygon points="408,443 412,447 412,464 408,468" fill="url(#cl)" />
<polygon points="408,468 412,464 510,464 514,468" fill="url(#cb)" />
<polygon points="514,443 514,468 510,464 510,447" fill="url(#cr)" />
<rect x="412" y="472" width="98" height="17" fill="#d8d8d8" />
<polygon points="408,468 514,468 510,472 412,472" fill="url(#ct)" />
<polygon points="408,468 412,472 412,489 408,493" fill="url(#cl)" />
<polygon points="408,493 412,489 510,489 514,493" fill="url(#cb)" />
<polygon points="514,468 514,493 510,489 510,472" fill="url(#cr)" />
<rect x="412" y="497" width="98" height="16" fill="#d8d8d8" />
<polygon points="408,493 514,493 510,497 412,497" fill="url(#ct)" />
<polygon points="408,493 412,497 412,513 408,517" fill="url(#cl)" />
<polygon points="408,517 412,513 510,513 514,517" fill="url(#cb)" />
<polygon points="514,493 514,517 510,513 510,497" fill="url(#cr)" />
<rect x="628" y="79" width="17" height="463" fill="#f0f0f0" />
<rect x="628" y="79" width="1" height="463" fill="#fbfbfb" />
<rect x="629" y="158" width="15" height="298" fill="#cdcdcd" />
<path d="M633.2 90.4 L636.6 86.6 L640 90.4" fill="none" stroke="#4c4c4c" stroke-width="2"/>
<path d="M633 531.5 L636.5 535 L640 531.5" fill="none" stroke="#4c4c4c" stroke-width="2"/>
<rect x="1" y="542" width="644" height="17" fill="#f0f0f0" />
<rect x="281" y="543" width="267" height="15" fill="#cdcdcd" />
<path d="M215 547.5 L211.5 550.8 L215 554.1" fill="none" stroke="#4c4c4c" stroke-width="2"/>
<path d="M618 547.5 L621.5 550.8 L618 554.1" fill="none" stroke="#4c4c4c" stroke-width="2"/>
<rect x="641" y="549" width="2" height="2" fill="#b4b4b4" />
<rect x="638" y="552" width="2" height="2" fill="#b4b4b4" />
<rect x="641" y="552" width="2" height="2" fill="#b4b4b4" />
<rect x="635" y="555" width="2" height="2" fill="#b4b4b4" />
<rect x="638" y="555" width="2" height="2" fill="#b4b4b4" />
<rect x="641" y="555" width="2" height="2" fill="#b4b4b4" />
<rect x="0.5" y="542.5" width="203.5" height="16" fill="#fff" stroke="#000"/>
<rect x="0" y="0" width="646" height="1" fill="#1c1c1c" />
<rect x="0" y="0" width="1" height="560" fill="#5c5c5c" />
<rect x="0" y="559" width="646" height="1" fill="#2a2a2a" />
<rect x="645" y="0" width="1" height="93" fill="#e8e8e8" />
<rect x="645" y="93" width="1" height="368" fill="#202020" />
<rect x="645" y="461" width="1" height="19" fill="#8a8a8a" />
<rect x="645" y="480" width="1" height="80" fill="#1c1c1c" />
</svg>
<span class="t" id="t1" style="top:9.0px;font-size:12px;color:#000;letter-spacing:-0.273px;left:32.5px;">analyze_int.vi</span>
<span class="t" id="t2" style="top:9.0px;font-size:12px;color:#000;letter-spacing:-0.103px;left:105.6px;">Front</span>
<span class="t" id="t3" style="top:9.0px;font-size:12px;color:#000;letter-spacing:-0.621px;left:137.1px;">Panel</span>
<span class="t" id="t4" style="top:9.0px;font-size:12px;color:#000;letter-spacing:0.270px;left:168.3px;">on</span>
<span class="t" id="t5" style="top:9.0px;font-size:12px;color:#000;letter-spacing:0.010px;left:186.5px;">Musashi_DoDog.lvproj/My</span>
<span class="t" id="t6" style="top:9.0px;font-size:12px;color:#000;letter-spacing:-0.273px;left:329.8px;">Computer</span>
<span class="t" id="t7" style="top:7.5px;font-size:15px;color:#000;left:385px;">*</span>
<span class="t" id="t8" style="top:34.0px;font-size:12px;color:#000;letter-spacing:-0.286px;left:7.9px;">File</span>
<span class="t" id="t9" style="top:34.0px;font-size:12px;color:#000;letter-spacing:-0.047px;left:39.9px;">Edit</span>
<span class="t" id="t10" style="top:34.0px;font-size:12px;color:#000;letter-spacing:0.076px;left:73.3px;">View</span>
<span class="t" id="t11" style="top:34.0px;font-size:12px;color:#000;letter-spacing:0.106px;left:112.9px;">Project</span>
<span class="t" id="t12" style="top:34.0px;font-size:12px;color:#000;letter-spacing:-0.208px;left:164.1px;">Operate</span>
<span class="t" id="t13" style="top:34.0px;font-size:12px;color:#000;letter-spacing:0.037px;left:219.9px;">Tools</span>
<span class="t" id="t14" style="top:34.0px;font-size:12px;color:#000;letter-spacing:0.269px;left:261.7px;">Window</span>
<span class="t" id="t15" style="top:34.0px;font-size:12px;color:#000;letter-spacing:0.178px;left:319.9px;">Help</span>
<span class="t" id="t16" style="top:58.0px;font-size:12px;color:#000;letter-spacing:0.111px;left:153.1px;">15pt Application Font</span>
<span class="t" id="t17" style="top:58.0px;font-size:12px;color:#787878;letter-spacing:-0.489px;left:459.9px;">Search</span>
<span class="t" id="t18" style="top:58.5px;font-size:19px;color:#fff200;left:558.7px;font-weight:bold;-webkit-text-stroke:1.6px #000;paint-order:stroke fill;">?</span>
<span class="t" id="t19" style="top:57.0px;font-size:9px;color:#000;left:636.2px;">1</span>
<span class="t" id="t20" style="top:98.0px;font-size:12px;color:#000;letter-spacing:-0.010px;left:37.5px;">file (use dialog)</span>
<span class="t" id="t21" style="top:119.0px;font-size:12px;color:#000;letter-spacing:-0.177px;left:51.2px;">Y:\FoilDetector\2023\07\14\0306_100214_BeamScint.log</span>
<span class="t" id="t22" style="top:157.0px;font-size:12px;color:#000;letter-spacing:-0.080px;left:33.7px;">Waveform Graph</span>
<span class="t" id="t23" style="top:153.0px;font-size:12px;color:#000;letter-spacing:0.169px;left:532.7px;">Plot 0</span>
<span class="t" id="t24" style="top:178.0px;font-size:12px;color:#000;letter-spacing:-0.300px;left:-103.10px;width:200px;text-align:right;">0.25</span>
<span class="t" id="t25" style="top:202.0px;font-size:12px;color:#000;letter-spacing:-0.300px;left:-103.10px;width:200px;text-align:right;">0</span>
<span class="t" id="t26" style="top:225.0px;font-size:12px;color:#000;letter-spacing:-0.300px;left:-103.10px;width:200px;text-align:right;">-0.25</span>
<span class="t" id="t27" style="top:249.0px;font-size:12px;color:#000;letter-spacing:-0.300px;left:-103.10px;width:200px;text-align:right;">-0.5</span>
<span class="t" id="t28" style="top:272.0px;font-size:12px;color:#000;letter-spacing:-0.300px;left:-103.10px;width:200px;text-align:right;">-0.75</span>
<span class="t" id="t29" style="top:296.0px;font-size:12px;color:#000;letter-spacing:-0.300px;left:-103.10px;width:200px;text-align:right;">-1</span>
<span class="t" id="t30" style="top:319.0px;font-size:12px;color:#000;letter-spacing:-0.300px;left:-103.10px;width:200px;text-align:right;">-1.25</span>
<span class="t" id="t31" style="top:343.0px;font-size:12px;color:#000;letter-spacing:-0.300px;left:-103.10px;width:200px;text-align:right;">-1.5</span>
<span class="t" id="t32" style="top:358.0px;font-size:12px;color:#000;letter-spacing:-0.300px;left:6.35px;width:200px;text-align:center;">0</span>
<span class="t" id="t33" style="top:358.0px;font-size:12px;color:#000;letter-spacing:-0.300px;left:67.35px;width:200px;text-align:center;">1E-6</span>
<span class="t" id="t34" style="top:358.0px;font-size:12px;color:#000;letter-spacing:-0.300px;left:128.35px;width:200px;text-align:center;">2E-6</span>
<span class="t" id="t35" style="top:358.0px;font-size:12px;color:#000;letter-spacing:-0.300px;left:188.35px;width:200px;text-align:center;">3E-6</span>
<span class="t" id="t36" style="top:358.0px;font-size:12px;color:#000;letter-spacing:-0.300px;left:249.35px;width:200px;text-align:center;">4E-6</span>
<span class="t" id="t37" style="top:358.0px;font-size:12px;color:#000;letter-spacing:-0.300px;left:310.35px;width:200px;text-align:center;">5E-6</span>
<span class="t" id="t38" style="top:358.0px;font-size:12px;color:#000;letter-spacing:-0.300px;left:371.35px;width:200px;text-align:center;">6E-6</span>
<span class="t" id="t39" style="top:358.0px;font-size:12px;color:#000;letter-spacing:-0.300px;left:431.35px;width:200px;text-align:center;">7E-6</span>
<span class="t" id="t40" style="top:358.0px;font-size:12px;color:#000;letter-spacing:-0.300px;left:492.35px;width:200px;text-align:center;">8E-6</span>
<span class="t" id="t41" style="top:375.0px;font-size:12px;color:#000;left:248.00px;width:200px;text-align:center;">Time</span>
<span class="t" id="t42" style="top:259.0px;font-size:12px;color:#000;letter-spacing:0.280px;left:-40.86px;width:200px;text-align:center;transform:rotate(-90deg);transform-origin:100px 8px;">Amplitude</span>
<span class="t" id="t43" style="top:409.0px;font-size:12px;color:#000;letter-spacing:-0.129px;left:60.0px;">array</span>
<span class="t" id="t44" style="top:430.0px;font-size:12px;color:#000;left:37.7px;">0</span>
<span class="t" id="t45" style="top:458.0px;font-size:12px;color:#000;left:37.7px;">0</span>
<span class="t" id="t46" style="top:444.0px;font-size:12px;color:#000;left:383.5px;">0</span>
<span class="t" id="t47" style="top:434.0px;font-size:12px;color:#000;letter-spacing:-0.300px;left:69px;">0</span>
<span class="t" id="t48" style="top:434.0px;font-size:12px;color:#000;letter-spacing:-0.300px;left:123px;">0.028</span>
<span class="t" id="t49" style="top:434.0px;font-size:12px;color:#000;letter-spacing:-0.300px;left:177px;">0.0018</span>
<span class="t" id="t50" style="top:434.0px;font-size:12px;color:#000;letter-spacing:-0.300px;left:231px;">0.09</span>
<span class="t" id="t51" style="top:434.0px;font-size:12px;color:#8c8c8c;letter-spacing:-0.300px;left:285px;">0</span>
<span class="t" id="t52" style="top:459.0px;font-size:12px;color:#000;letter-spacing:-0.300px;left:69px;">8E-10</span>
<span class="t" id="t53" style="top:459.0px;font-size:12px;color:#000;letter-spacing:-0.300px;left:123px;">0.028</span>
<span class="t" id="t54" style="top:459.0px;font-size:12px;color:#000;letter-spacing:-0.300px;left:177px;">0.0018</span>
<span class="t" id="t55" style="top:459.0px;font-size:12px;color:#000;letter-spacing:-0.300px;left:231px;">0.07</span>
<span class="t" id="t56" style="top:459.0px;font-size:12px;color:#8c8c8c;letter-spacing:-0.300px;left:285px;">0</span>
<span class="t" id="t57" style="top:484.0px;font-size:12px;color:#000;letter-spacing:-0.300px;left:69px;">1.6E-9</span>
<span class="t" id="t58" style="top:484.0px;font-size:12px;color:#000;letter-spacing:-0.300px;left:123px;">0.02</span>
<span class="t" id="t59" style="top:484.0px;font-size:12px;color:#000;letter-spacing:-0.300px;left:177px;">0.0018</span>
<span class="t" id="t60" style="top:484.0px;font-size:12px;color:#000;letter-spacing:-0.300px;left:231px;">0.07</span>
<span class="t" id="t61" style="top:484.0px;font-size:12px;color:#8c8c8c;letter-spacing:-0.300px;left:285px;">0</span>
<span class="t" id="t62" style="top:509.0px;font-size:12px;color:#000;letter-spacing:-0.300px;left:69px;">2.4E-9</span>
<span class="t" id="t63" style="top:509.0px;font-size:12px;color:#000;letter-spacing:-0.300px;left:123px;">0.02</span>
<span class="t" id="t64" style="top:509.0px;font-size:12px;color:#000;letter-spacing:-0.300px;left:177px;">0.0018</span>
<span class="t" id="t65" style="top:509.0px;font-size:12px;color:#000;letter-spacing:-0.300px;left:231px;">0.05</span>
<span class="t" id="t66" style="top:509.0px;font-size:12px;color:#8c8c8c;letter-spacing:-0.300px;left:285px;">0</span>
<span class="t" id="t67" style="top:423.0px;font-size:12px;color:#000;letter-spacing:-0.115px;left:405.9px;">Integrals</span>
<span class="t" id="t68" style="top:448.0px;font-size:12px;color:#000;letter-spacing:-0.300px;left:415.5px;">-262.968</span>
<span class="t" id="t69" style="top:473.0px;font-size:12px;color:#000;letter-spacing:-0.300px;left:415.5px;">-345.628</span>
<span class="t" id="t70" style="top:498.0px;font-size:12px;color:#000;letter-spacing:-0.300px;left:415.5px;">-24.84</span>
<span class="t" id="t71" style="top:542.0px;font-size:12px;color:#000;letter-spacing:0.060px;left:3.5px;">Musashi_DoDog.lvproj/My Computer</span>
</div></body></html>
